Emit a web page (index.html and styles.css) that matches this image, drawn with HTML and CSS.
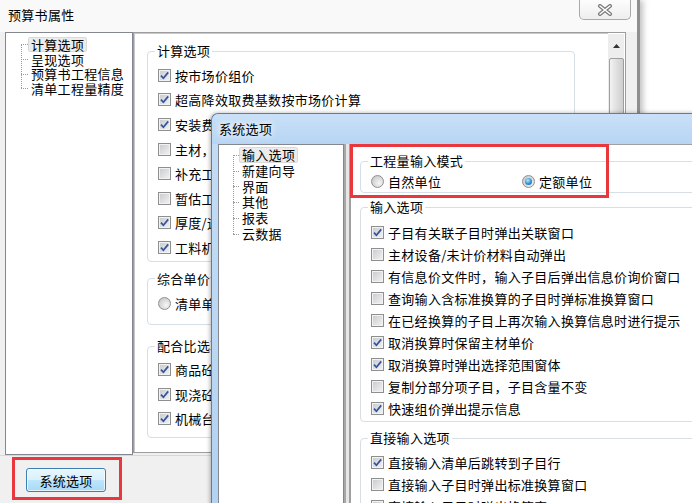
FILE: index.html
```html
<!DOCTYPE html>
<html lang="zh-CN">
<head>
    <meta charset="UTF-8">
    <title>系统选项</title>
    <link rel="stylesheet" href="styles.css">
</head>
<body>
<div class="desk">
    <!-- 预算书属性（后面的窗口） -->
    <div class="win-back">
        <div class="back-title">预算书属性</div>
        <div class="close-btn">
            <svg width="16" height="12" viewBox="0 0 16 12">
                <path d="M3 2l10 8M13 2L3 10" stroke="#7a7a7a" stroke-width="4" stroke-linecap="round"/>
                <path d="M3 2l10 8M13 2L3 10" stroke="#fff" stroke-width="1.6" stroke-linecap="round"/>
            </svg>
        </div>
        <div class="back-body">
            <ul class="tree back-tree">
                <li class="sel"><span>计算选项</span></li>
                <li><span>呈现选项</span></li>
                <li><span>预算书工程信息</span></li>
                <li><span>清单工程量精度</span></li>
            </ul>
            <div class="back-panel">
                <div class="back-page">
                    <fieldset class="grp bg-calc">
                        <legend>计算选项</legend>
                        <div class="row"><span class="cb on"><svg viewBox="0 0 11 11"><path d="M2 5.6l2.4 2.7L9.2 2.4"/></svg></span>按市场价组价</div>
                        <div class="row"><span class="cb on"><svg viewBox="0 0 11 11"><path d="M2 5.6l2.4 2.7L9.2 2.4"/></svg></span>超高降效取费基数按市场价计算</div>
                        <div class="row"><span class="cb on"><svg viewBox="0 0 11 11"><path d="M2 5.6l2.4 2.7L9.2 2.4"/></svg></span>安装费用取费基数按市场价计算</div>
                        <div class="row"><span class="cb"></span>主材，设备不计入综合单价</div>
                        <div class="row"><span class="cb"></span>补充工料机保存到补充库</div>
                        <div class="row"><span class="cb"></span>暂估工料机不参与调价</div>
                        <div class="row"><span class="cb on"><svg viewBox="0 0 11 11"><path d="M2 5.6l2.4 2.7L9.2 2.4"/></svg></span>厚度/运距换算按实际计算</div>
                        <div class="row"><span class="cb on"><svg viewBox="0 0 11 11"><path d="M2 5.6l2.4 2.7L9.2 2.4"/></svg></span>工料机单价保留两位小数</div>
                    </fieldset>
                    <fieldset class="grp bg-price">
                        <legend>综合单价计算方式</legend>
                        <div class="row"><span class="rb"></span>清单单价取费</div>
                    </fieldset>
                    <fieldset class="grp bg-mix">
                        <legend>配合比选项</legend>
                        <div class="row"><span class="cb on"><svg viewBox="0 0 11 11"><path d="M2 5.6l2.4 2.7L9.2 2.4"/></svg></span>商品砼按配合比计算</div>
                        <div class="row"><span class="cb on"><svg viewBox="0 0 11 11"><path d="M2 5.6l2.4 2.7L9.2 2.4"/></svg></span>现浇砼按配合比计算</div>
                        <div class="row"><span class="cb on"><svg viewBox="0 0 11 11"><path d="M2 5.6l2.4 2.7L9.2 2.4"/></svg></span>机械台班按组成计算</div>
                    </fieldset>
                </div>
                <div class="vscroll">
                    <div class="sb-up"><svg width="7" height="4" viewBox="0 0 7 4"><path d="M0 4L3.5 0 7 4z" fill="#333"/></svg></div>
                    <div class="sb-thumb"></div>
                </div>
            </div>
        </div>
        <div class="back-foot">
            <button class="btn">系统选项</button>
        </div>
    </div>

    <!-- 系统选项（前面的窗口） -->
    <div class="win-front">
        <div class="front-title">系统选项</div>
        <div class="front-body">
            <ul class="tree front-tree">
                <li class="sel"><span>输入选项</span></li>
                <li><span>新建向导</span></li>
                <li><span>界面</span></li>
                <li><span>其他</span></li>
                <li><span>报表</span></li>
                <li><span>云数据</span></li>
            </ul>
            <div class="front-panel">
                <div class="front-page">
                    <fieldset class="grp fg-mode">
                        <legend>工程量输入模式</legend>
                        <div class="row radio-row">
                            <div class="opt"><span class="rb"></span>自然单位</div>
                            <div class="opt"><span class="rb on"></span>定额单位</div>
                        </div>
                    </fieldset>
                    <fieldset class="grp fg-input">
                        <legend>输入选项</legend>
                        <div class="row"><span class="cb on"><svg viewBox="0 0 11 11"><path d="M2 5.6l2.4 2.7L9.2 2.4"/></svg></span>子目有关联子目时弹出关联窗口</div>
                        <div class="row"><span class="cb"></span>主材设备/未计价材料自动弹出</div>
                        <div class="row"><span class="cb"></span>有信息价文件时，输入子目后弹出信息价询价窗口</div>
                        <div class="row"><span class="cb"></span>查询输入含标准换算的子目时弹标准换算窗口</div>
                        <div class="row"><span class="cb"></span>在已经换算的子目上再次输入换算信息时进行提示</div>
                        <div class="row"><span class="cb on"><svg viewBox="0 0 11 11"><path d="M2 5.6l2.4 2.7L9.2 2.4"/></svg></span>取消换算时保留主材单价</div>
                        <div class="row"><span class="cb on"><svg viewBox="0 0 11 11"><path d="M2 5.6l2.4 2.7L9.2 2.4"/></svg></span>取消换算时弹出选择范围窗体</div>
                        <div class="row"><span class="cb"></span>复制分部分项子目，子目含量不变</div>
                        <div class="row"><span class="cb on"><svg viewBox="0 0 11 11"><path d="M2 5.6l2.4 2.7L9.2 2.4"/></svg></span>快速组价弹出提示信息</div>
                    </fieldset>
                    <fieldset class="grp fg-direct">
                        <legend>直接输入选项</legend>
                        <div class="row"><span class="cb on"><svg viewBox="0 0 11 11"><path d="M2 5.6l2.4 2.7L9.2 2.4"/></svg></span>直接输入清单后跳转到子目行</div>
                        <div class="row"><span class="cb"></span>直接输入子目时弹出标准换算窗口</div>
                        <div class="row"><span class="cb"></span>直接输入子目时弹出换算窗口</div>
                    </fieldset>
                </div>
            </div>
        </div>
    </div>

    <!-- 红色标注框 -->
    <div class="mark mark-btn"></div>
    <div class="mark mark-mode"></div>
</div>
</body>
</html>
```

FILE: styles.css
```css
* {
    box-sizing: border-box;
}

body {
    margin: 0;
    font-family: "Noto Sans CJK SC", "Microsoft YaHei", sans-serif;
    font-size: 13px;
    letter-spacing: 0.3px;
    color: #000;
    background: #fff;
}

.desk {
    position: relative;
    width: 692px;
    height: 503px;
    overflow: hidden;
    background: #fff;
}

/* 后面的窗口 */
.win-back {
    position: absolute;
    left: 0;
    top: 0;
    width: 640px;
    height: 503px;
    background: #f0f0f0;
    border-right: 3px solid #8f8f8f;
    box-shadow: 3px 0 6px rgba(0, 0, 0, 0.25);
    display: flex;
    flex-direction: column;
}

.back-title {
    height: 32px;
    padding: 6px 8px 0;
    line-height: 18px;
    background: #f9f9f9;
}

.close-btn {
    position: absolute;
    left: 579px;
    top: -3px;
    width: 52px;
    height: 23px;
    border: 1px solid #a9a9a9;
    border-top: none;
    border-radius: 0 0 5px 5px;
    background: linear-gradient(#ffffff, #eeeeee);
    display: flex;
    justify-content: center;
    align-items: center;
    padding-top: 3px;
}

.back-body {
    display: flex;
    padding-left: 5px;
    height: 423px;
}

/* 树 */
.tree {
    flex: none;
    list-style: none;
    margin: 0;
    background: #fff;
    border: 1px solid #828790;
    position: relative;
}

.tree li {
    position: relative;
    white-space: nowrap;
}

.tree li span {
    display: inline-block;
    padding: 0 2px;
    border: 1px solid transparent;
    border-radius: 2px;
    height: 100%;
}

.tree li.sel span {
    background: #ececec;
    border-color: #dadada;
}

.tree li::before {
    content: "";
    position: absolute;
    top: 50%;
    border-top: 1px dotted #9a9a9a;
}

.tree::before {
    content: "";
    position: absolute;
    border-left: 1px dotted #9a9a9a;
}

.back-tree {
    width: 128px;
    height: 423px;
    padding: 4px 0 0 22px;
}

.back-tree li {
    height: 14.7px;
    line-height: 13px;
}

.back-tree li::before {
    left: -7px;
    width: 7px;
}

.back-tree::before {
    left: 15px;
    top: 11px;
    height: 44px;
}

.back-panel {
    flex: none;
    width: 493px;
    height: 421px;
    border: 1px solid #9d9d9d;
    display: flex;
    background: #fff;
}

.back-page {
    flex: 1;
    min-width: 0;
    border-top: 1px solid #c8c8c8;
    border-left: 1px solid #c8c8c8;
    padding: 8px 0 0 12px;
}

.vscroll {
    flex: none;
    width: 16px;
    margin: 1px 1px 0 0;
    background: #ededed;
    display: flex;
    flex-direction: column;
    align-items: center;
}

.sb-up {
    height: 24px;
    display: flex;
    align-items: center;
    justify-content: center;
}

.sb-thumb {
    width: 15px;
    height: 300px;
    border: 1px solid #9e9e9e;
    border-radius: 2px;
    background: linear-gradient(to right, #f3f3f3, #dcdcdc 60%, #cfcfcf);
}

/* 分组框 */
.grp {
    margin: 0;
    min-width: 0;
    border: 1px solid #d5dfe5;
    border-radius: 4px;
    background: #fff;
    padding: 0 0 0 10px;
}

.grp legend {
    padding: 0 2px;
    margin-left: -3px;
    line-height: 18px;
    height: 18px;
}

.row {
    display: flex;
    align-items: center;
    gap: 4px;
    white-space: nowrap;
}

.bg-calc, .bg-price, .bg-mix {
    width: 428px;
}

.bg-calc {
    padding-top: 3px;
    padding-bottom: 1px;
}

.bg-calc .row, .bg-mix .row, .bg-price .row {
    height: 24.6px;
}

.bg-price {
    margin-top: 8px;
    padding-top: 3px;
    padding-bottom: 9px;
}

.bg-mix {
    margin-top: 12px;
    padding-top: 2px;
    padding-bottom: 6px;
}

/* 复选框和单选框 */
.cb {
    flex: none;
    width: 13px;
    height: 13px;
    border: 1px solid #8e8f8f;
    background: linear-gradient(135deg, #c6c9ce, #f3f3f3);
    box-shadow: inset 0 0 0 1px #f2f2f2;
    display: flex;
    justify-content: center;
    align-items: center;
}

.cb svg {
    width: 11px;
    height: 11px;
}

.cb path {
    fill: none;
    stroke: #34539e;
    stroke-width: 1.7;
}

.rb {
    flex: none;
    width: 13px;
    height: 13px;
    border-radius: 50%;
    border: 1px solid #8e8f8f;
    background: radial-gradient(circle at 65% 65%, #f6f6f6, #cfcfcf 70%);
    display: flex;
    justify-content: center;
    align-items: center;
}

.rb.on::after {
    content: "";
    width: 7px;
    height: 7px;
    border-radius: 50%;
    background: radial-gradient(circle at 40% 35%, #b6ecff, #2d8fd4 55%, #17529a);
}

/* 底部按钮 */
.back-foot {
    flex: 1;
    border-top: 1px solid #d8d8d8;
    padding: 12px 0 0 26px;
}

.btn {
    width: 80px;
    height: 24px;
    padding: 0;
    font: inherit;
    letter-spacing: 0.3px;
    color: #000;
    border: 1px solid #3c7fb1;
    border-radius: 3px;
    background: linear-gradient(#eaf6fd, #d9f0fc 50%, #bee6fd 50%, #a7d9f5);
    box-shadow: inset 0 0 0 1px rgba(255, 255, 255, 0.7);
}

/* 前面的窗口 */
.win-front {
    position: absolute;
    left: 211px;
    top: 113px;
    width: 500px;
    height: 400px;
    border: 1px solid #5d7ea3;
    border-right: none;
    border-radius: 7px 0 0 0;
    background: linear-gradient(#c4ddf6, #b3d2f1);
    box-shadow: -1px 0 4px rgba(0, 0, 0, 0.3);
    display: flex;
    flex-direction: column;
}

.front-title {
    height: 31px;
    line-height: 30px;
    padding-left: 7px;
    text-shadow: 0 0 6px #fff, 0 0 10px #fff;
    background: linear-gradient(#c9e0f8, #b7d5f3);
    border-radius: 7px 0 0 0;
}

.front-body {
    flex: 1;
    display: flex;
    margin-left: 6px;
    background: #f0f0f0;
}

.front-tree {
    width: 126px;
    padding: 2px 0 0 20px;
}

.front-tree li {
    height: 15.8px;
    line-height: 14px;
}

.front-tree li::before {
    left: -6px;
    width: 6px;
}

.front-tree::before {
    left: 14px;
    top: 10px;
    height: 79px;
}

.front-panel {
    flex: 1;
    min-width: 0;
    border-left: 2px solid #a7a7a7;
    padding-left: 3px;
    background: #e6e6e6;
}

.front-page {
    height: 100%;
    border-left: 2px solid #a0a0a0;
    border-top: 1px solid #a0a0a0;
    background: #fff;
    padding: 7px 0 0 9px;
}

.front-page .grp {
    width: 420px;
}

.front-page .row {
    height: 22px;
}

.fg-mode {
    padding-bottom: 0;
}

.radio-row .opt {
    display: flex;
    align-items: center;
    gap: 4px;
    width: 147px;
}

.fg-input {
    margin-top: 5px;
    padding-top: 5px;
    padding-bottom: 2px;
}

.fg-direct {
    margin-top: 7px;
    padding-top: 4px;
}

/* 红框标注 */
.mark {
    position: absolute;
    border: 3px solid #e8383d;
}

.mark-btn {
    left: 12px;
    top: 457px;
    width: 110px;
    height: 43px;
}

.mark-mode {
    left: 350px;
    top: 144px;
    width: 259px;
    height: 54px;
}
```
